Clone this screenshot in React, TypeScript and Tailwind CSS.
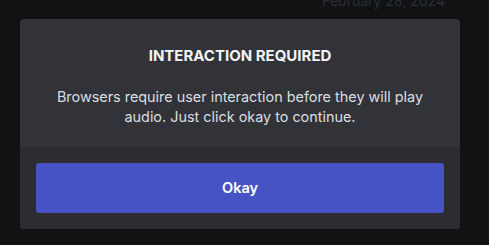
const App = () => {
  return (
    <div
      className="relative h-[245px] w-[489px] overflow-hidden bg-[#111214]"
      style={{ fontFamily: 'Inter, "Noto Sans", sans-serif' }}
    >
      <div className="absolute right-[44px] top-[-7px] text-[14px] leading-[16px] text-[#2c2e33]">
        February 28, 2024
      </div>
      <div className="absolute left-[20px] top-[19px] w-[440px] overflow-hidden rounded-[4px] bg-[#313338]">
        <div className="flex flex-col items-center px-4 pb-[20px] pt-[27px] text-center">
          <h2 className="text-[15px] font-bold leading-[20px] text-[#f2f3f5]">INTERACTION REQUIRED</h2>
          <p className="mt-[21px] px-[20px] text-[14.4px] leading-[20px] text-[#dbdee1]">
            Browsers require user interaction before they will play audio. Just click okay to continue.
          </p>
        </div>
        <div className="bg-[#2b2d31] p-4">
          <button className="flex h-[50px] w-full items-center justify-center rounded-[3px] bg-[#4752c4] text-[14.5px] font-semibold text-white">
            Okay
          </button>
        </div>
      </div>
    </div>
  );
};

export default App;
